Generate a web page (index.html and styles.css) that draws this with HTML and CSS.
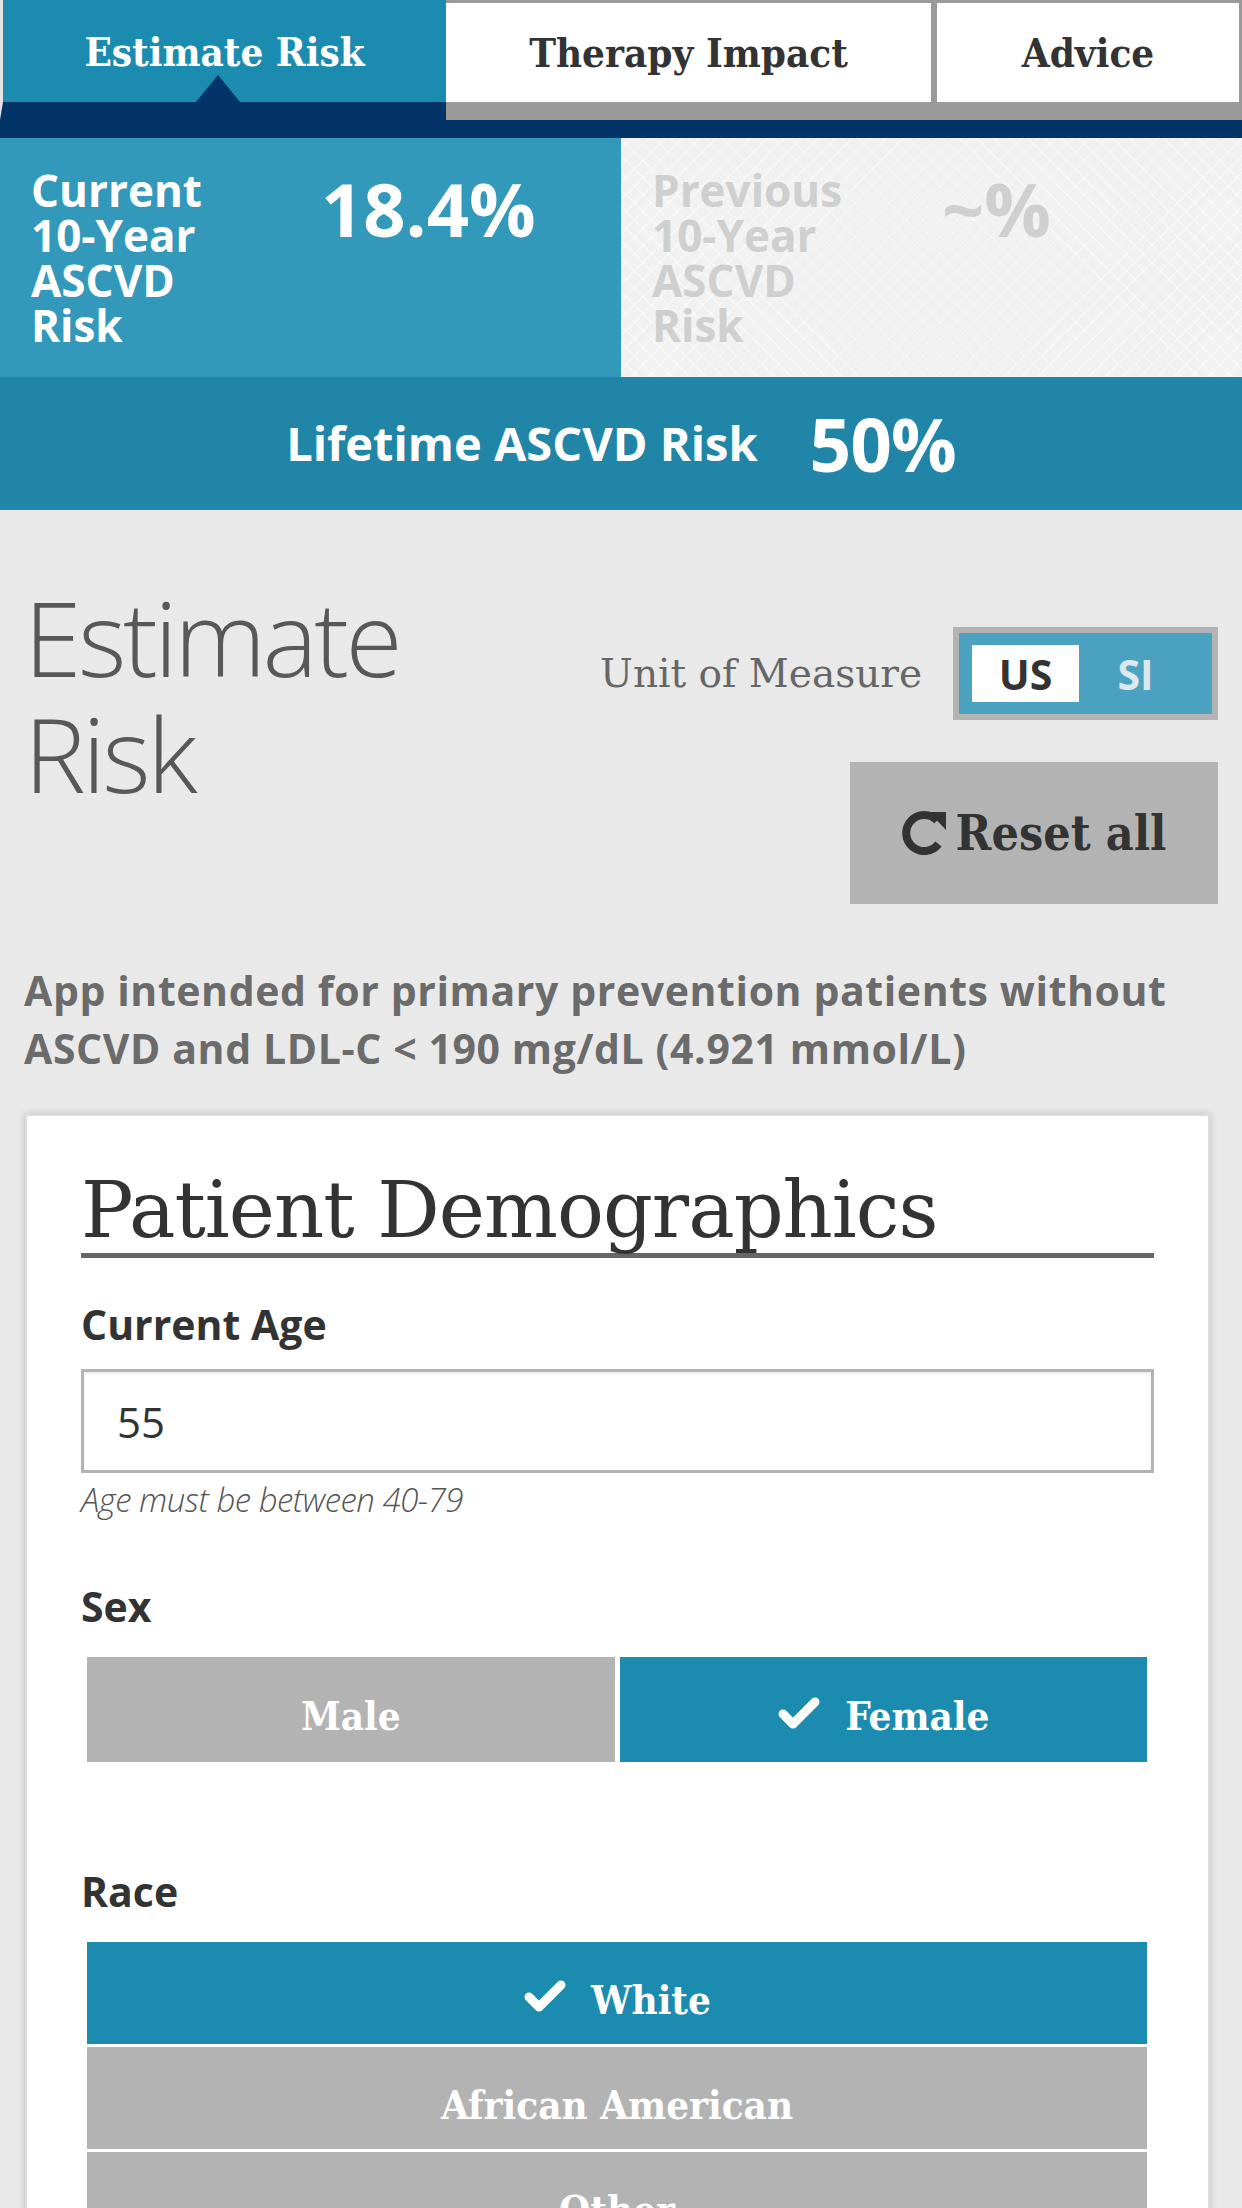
FILE: index.html
```html
<!DOCTYPE html>
<html lang="en">
<head>
<meta charset="utf-8">
<title>Estimate Risk</title>
<link rel="stylesheet" href="styles.css">
</head>
<body>
<nav class="tabs">
  <div class="tab active">Estimate Risk<span class="pointer"></span></div>
  <div class="tab therapy">Therapy Impact</div>
  <div class="tab advice">Advice</div>
</nav>

<section class="risk">
  <div class="panel current">
    <div class="panel-label">Current<br>10-Year<br>ASCVD<br>Risk</div>
    <div class="panel-value">18.4%</div>
  </div>
  <div class="panel previous">
    <div class="panel-label">Previous<br>10-Year<br>ASCVD<br>Risk</div>
    <div class="panel-value">~%</div>
  </div>
</section>

<section class="lifetime">
  <span class="lifetime-label">Lifetime ASCVD Risk</span>
  <span class="lifetime-value">50%</span>
</section>

<main class="main">
  <div class="head-row">
    <h1 class="page-title">Estimate<br>Risk</h1>
    <div class="controls">
      <div class="unit-row">
        <span class="unit-label">Unit of Measure</span>
        <div class="toggle">
          <span class="opt on">US</span>
          <span class="opt">SI</span>
        </div>
      </div>
      <button class="reset" type="button">
        <svg class="reset-icon" viewBox="0 0 44 44" aria-hidden="true">
          <path d="M35.2 9.6 A18 18 0 1 0 36.5 33" fill="none" stroke="#333" stroke-width="8"/>
          <polygon points="27,1 44,1 44,19" fill="#333"/>
        </svg>
        <span>Reset all</span>
      </button>
    </div>
  </div>

  <p class="notice">App intended for primary prevention patients without ASCVD and LDL-C &lt; 190 mg/dL (4.921 mmol/L)</p>

  <section class="card">
    <h2 class="card-title">Patient Demographics</h2>

    <div class="field-label first">Current Age</div>
    <div class="input">55</div>
    <div class="hint">Age must be between 40-79</div>

    <div class="field-label sex-label">Sex</div>
    <div class="choice-row">
      <div class="choice">Male</div>
      <div class="choice selected">
        <svg class="check" viewBox="0 0 44 32" aria-hidden="true"><path d="M6 17 L16 27 L38 5" fill="none" stroke="#fff" stroke-width="9" stroke-linecap="round" stroke-linejoin="round"/></svg>
        Female
      </div>
    </div>

    <div class="field-label race-label">Race</div>
    <div class="choice-col">
      <div class="choice selected">
        <svg class="check" viewBox="0 0 44 32" aria-hidden="true"><path d="M6 17 L16 27 L38 5" fill="none" stroke="#fff" stroke-width="9" stroke-linecap="round" stroke-linejoin="round"/></svg>
        White
      </div>
      <div class="choice">African American</div>
      <div class="choice">Other</div>
    </div>
  </section>
</main>
</body>
</html>
```

FILE: styles.css
```css
* { box-sizing: border-box; }

html, body {
  margin: 0;
  padding: 0;
}

body {
  width: 1242px;
  min-height: 2208px;
  background: #e9e9e9;
  font-family: "Open Sans", "Liberation Sans", sans-serif;
  overflow: hidden;
}

/* ---------- tabs ---------- */
.tabs {
  display: flex;
  height: 138px;
  background: #033468;
}

.tab {
  position: relative;
  height: 120px;
  display: flex;
  align-items: center;
  justify-content: center;
  font-family: "DejaVu Serif", "Liberation Serif", serif;
  font-stretch: condensed;
  font-weight: 700;
  font-size: 40px;
  color: #333;
  background: #fff;
  border: 3px solid #9a9a9a;
  border-bottom-width: 18px;
}

.tab.active {
  flex: 0 0 446px;
  color: #fff;
  background: #1b8cb0;
  border: none;
  border-left: 3px solid #e4e4e4;
  border-bottom: 18px solid #033468;
}

.tab.therapy {
  flex: 0 0 488px;
  border-left: none;
}

.tab.advice {
  flex: 1 1 auto;
}

.pointer {
  position: absolute;
  left: 193px;
  bottom: 0;
  width: 0;
  height: 0;
  border-left: 22px solid transparent;
  border-right: 22px solid transparent;
  border-bottom: 27px solid #033468;
}

/* ---------- risk panels ---------- */
.risk {
  display: flex;
  height: 239px;
}

.panel {
  flex: 0 0 621px;
  display: flex;
  align-items: flex-start;
  padding: 30px 0 0 31px;
}

.panel.current {
  background: #3399bb;
  color: #fff;
}

.panel.previous {
  background-color: #f1f1f1;
  background-image:
    repeating-linear-gradient(45deg, rgba(255,255,255,0.45) 0 1px, transparent 1px 12px),
    repeating-linear-gradient(-45deg, rgba(255,255,255,0.45) 0 1px, transparent 1px 12px);
  color: #cfcfcf;
}

.panel-label {
  width: 290px;
  font-weight: 700;
  font-size: 44px;
  line-height: 45px;
}

.panel-value {
  margin-top: 4px;
  font-weight: 700;
  font-size: 74px;
  line-height: 73px;
}

.lifetime {
  height: 133px;
  background: #2085a6;
  color: #fff;
  display: flex;
  align-items: center;
  justify-content: center;
  gap: 52px;
}

.lifetime-label {
  font-weight: 700;
  font-size: 47px;
  line-height: 47px;
}

.lifetime-value {
  font-weight: 700;
  font-size: 73px;
  line-height: 73px;
  letter-spacing: -1px;
}

/* ---------- main ---------- */
.main {
  padding: 69px 24px 0 24px;
}

.head-row {
  display: flex;
  justify-content: space-between;
  align-items: flex-start;
}

.page-title {
  margin: 0;
  font-weight: 300;
  font-size: 104px;
  line-height: 116px;
  color: #585858;
  letter-spacing: -3.5px;
}

.controls {
  padding-top: 48px;
  display: flex;
  flex-direction: column;
  align-items: flex-end;
  gap: 42px;
}

.unit-row {
  display: flex;
  align-items: center;
  gap: 31px;
}

.unit-label {
  font-family: "DejaVu Serif", "Liberation Serif", serif;
  font-size: 39px;
  color: #666;
}

.toggle {
  display: flex;
  width: 265px;
  height: 93px;
  padding: 12px 23px 12px 13px;
  gap: 3px;
  background: #4aa2c0;
  border: 6px solid #b3b3b3;
}

.opt {
  flex: 0 0 107px;
  display: flex;
  align-items: center;
  justify-content: center;
  font-weight: 700;
  font-size: 41px;
  color: #dbe9ef;
}

.opt.on {
  background: #fff;
  color: #333;
}

.reset {
  width: 368px;
  height: 142px;
  border: none;
  background: #b3b3b3;
  display: flex;
  align-items: center;
  justify-content: center;
  gap: 10px;
  padding: 0;
  font-family: "DejaVu Serif", "Liberation Serif", serif;
  font-stretch: condensed;
  font-weight: 700;
  font-size: 48px;
  color: #333;
}

.reset-icon {
  width: 44px;
  height: 44px;
}

.notice {
  margin: 57px 0 37px 0;
  font-weight: 700;
  font-size: 41px;
  line-height: 58px;
  color: #6b6b6b;
  letter-spacing: 0.6px;
}

/* ---------- card ---------- */
.card {
  margin: 0 8px 0 1px;
  background: #fff;
  border: 2px solid #dcdcdc;
  box-shadow: 0 0 8px rgba(0, 0, 0, 0.18);
  padding: 51px 54px 60px 54px;
}

.card-title {
  margin: 0;
  font-family: "DejaVu Serif", "Liberation Serif", serif;
  font-weight: 400;
  font-size: 78px;
  line-height: 86px;
  color: #333;
  border-bottom: 5px solid #666;
  letter-spacing: -1px;
}

.field-label {
  font-weight: 700;
  font-size: 41px;
  line-height: 49px;
  color: #333;
}

.field-label.first { margin-top: 42px; }
.field-label.sex-label { margin-top: 61px; }
.field-label.race-label { margin-top: 105px; }

.input {
  margin-top: 20px;
  height: 104px;
  border: 3px solid #b3b3b3;
  box-shadow: inset 0 2px 3px rgba(0, 0, 0, 0.08);
  padding-left: 33px;
  display: flex;
  align-items: center;
  font-size: 42px;
  color: #333;
}

.hint {
  margin-top: 6px;
  font-weight: 300;
  font-style: italic;
  font-size: 33px;
  line-height: 42px;
  color: #555;
  letter-spacing: -0.5px;
}

.choice-row {
  margin: 26px 7px 0 6px;
  display: flex;
  gap: 5px;
}

.choice-row .choice {
  flex: 1 1 0;
  height: 105px;
}

.choice-col {
  margin: 26px 7px 0 6px;
  display: flex;
  flex-direction: column;
  gap: 3px;
}

.choice-col .choice {
  height: 102px;
}

.choice {
  display: flex;
  align-items: center;
  justify-content: center;
  gap: 24px;
  padding-top: 12px;
  background: #b3b3b3;
  color: #fff;
  font-family: "DejaVu Serif", "Liberation Serif", serif;
  font-stretch: condensed;
  font-weight: 700;
  font-size: 40px;
}

.choice.selected {
  background: #1b8caf;
}

.check {
  width: 44px;
  height: 32px;
  margin-top: -6px;
}
```
